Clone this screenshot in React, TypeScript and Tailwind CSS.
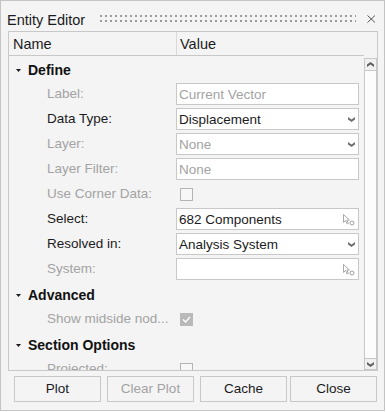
import React from "react";

const Chevron = ({ color = "#707070" }: { color?: string }) => (
  <svg width="7" height="5" viewBox="0 0 7 5">
    <path d="M0 0 L3.5 2.4 L7 0 L7 2.4 L3.5 5 L0 2.4 Z" fill={color} />
  </svg>
);

const PickIcon = () => (
  <svg width="13" height="13" viewBox="0 0 13 13">
    <path d="M1.5 1.5 L1.5 9.5 L3.5 7.5 L5.2 11 L6.4 10.4 L4.8 7 L7.5 7 Z" fill="white" stroke="#a0a0a0" strokeWidth="0.9" strokeLinejoin="round" />
    <circle cx="10" cy="10" r="2" fill="white" stroke="#a0a0a0" strokeWidth="1" />
  </svg>
);

const Section = ({ title }: { title: string }) => (
  <div className="h-[25px] flex items-center pl-[7px] shrink-0">
    <svg width="5" height="3" viewBox="0 0 5 3" className="mr-[7px]">
      <path d="M0 0 L5 0 L2.5 3 Z" fill="#1a1a1a" />
    </svg>
    <span className="text-[14px] font-bold text-[#111]">{title}</span>
  </div>
);

const Row = ({ label, disabled, children }: { label: string; disabled?: boolean; children?: React.ReactNode }) => (
  <div className="h-[25px] flex shrink-0">
    <div className={`w-[167px] h-[23px] pl-[38px] flex items-center text-[13.5px] whitespace-nowrap ${disabled ? "text-[#a3a3a3]" : "text-[#1b1b22]"}`}>
      {label}
    </div>
    <div className="flex-1 flex">{children}</div>
  </div>
);

const Field = ({ text, gray, select, pick }: { text?: string; gray?: boolean; select?: boolean; pick?: boolean }) => (
  <div className="w-[183px] h-[22px] border border-[#c8c8c8] bg-white flex items-center pl-[2px] pr-[3px]">
    <span className={`flex-1 text-[13.5px] leading-[16px] pt-[1px] whitespace-nowrap ${gray ? "text-[#a3a3a3]" : "text-[#1b1b22]"}`}>{text}</span>
    {select && <Chevron />}
    {pick && <PickIcon />}
  </div>
);

const Check = ({ checked }: { checked?: boolean }) => (
  <div className="h-[22px] flex items-center pl-[4px]">
    {checked ? (
      <div className="w-[13px] h-[13px] bg-[#b9b9b9] flex items-center justify-center">
        <svg width="9" height="7" viewBox="0 0 9 7">
          <path d="M1 3.5 L3.5 6 L8 1" fill="none" stroke="white" strokeWidth="1.3" />
        </svg>
      </div>
    ) : (
      <div className="w-[13px] h-[13px] border border-[#b4b4b4] bg-[#f7f7f7]" />
    )}
  </div>
);

const Btn = ({ label, disabled, ml }: { label: string; disabled?: boolean; ml: string }) => (
  <div className={`${ml} w-[87px] h-[26px] border border-[#c8c8c8] bg-[#f4f4f4] flex items-center justify-center pt-[1px] text-[13.5px] ${disabled ? "text-[#a3a3a3]" : "text-[#1b1b22]"}`}>
    {label}
  </div>
);

export default function App() {
  return (
    <div className="w-[385px] h-[411px] border border-[#c4c4c4] bg-[#f4f4f4] flex flex-col font-['Liberation_Sans',Arial,sans-serif] overflow-hidden">
      {/* title bar */}
      <div className="h-[30px] shrink-0 flex items-start pt-[11px] pl-[6px]">
        <span className="text-[14.5px] leading-[17px] text-[#1b1b22] whitespace-nowrap">Entity Editor</span>
        <svg width="256" height="8" className="ml-[15px] mt-[3px]">
          <defs>
            <pattern id="dots" width="5" height="5" patternUnits="userSpaceOnUse">
              <rect x="0" y="0" width="2" height="2" fill="#9c9c9c" />
            </pattern>
          </defs>
          <rect x="0" y="0" width="256" height="7" fill="url(#dots)" />
        </svg>
        <svg width="9" height="8" viewBox="0 0 9 8" className="ml-[11px] mt-[3px]">
          <path d="M0.5 0.5 L8 7.5 M8 0.5 L0.5 7.5" stroke="#555" strokeWidth="1" />
        </svg>
      </div>

      {/* panel */}
      <div className="ml-[7px] w-[370px] h-[340px] shrink-0 border border-[#c8c8c8] flex flex-col">
        <div className="h-[24px] shrink-0 flex">
          <div className="w-[355px] border-b border-[#c8c8c8] flex text-[14.5px] text-[#1b1b22]">
            <div className="w-[168px] border-r border-[#d9d9d9] pl-[4px] pt-[2px] flex items-center">Name</div>
            <div className="pl-[3px] pt-[2px] flex items-center">Value</div>
          </div>
        </div>
        <div className="flex-1 flex overflow-hidden">
          <div className="w-[355px] pt-[2px] flex flex-col overflow-hidden">
            <Section title="Define" />
            <Row label="Label:" disabled>
              <Field text="Current Vector" gray />
            </Row>
            <Row label="Data Type:">
              <Field text="Displacement" select />
            </Row>
            <Row label="Layer:" disabled>
              <Field text="None" gray select />
            </Row>
            <Row label="Layer Filter:" disabled>
              <Field text="None" gray />
            </Row>
            <Row label="Use Corner Data:" disabled>
              <Check />
            </Row>
            <Row label="Select:">
              <Field text="682 Components" pick />
            </Row>
            <Row label="Resolved in:">
              <Field text="Analysis System" select />
            </Row>
            <Row label="System:" disabled>
              <Field text="" pick />
            </Row>
            <Section title="Advanced" />
            <Row label="Show midside nod..." disabled>
              <Check checked />
            </Row>
            <Section title="Section Options" />
            <Row label="Projected:" disabled>
              <Check />
            </Row>
          </div>
          {/* scrollbar */}
          <div className="w-[13px] pt-[2px] flex flex-col">
            <div className="h-[13px] border border-[#c8c8c8] bg-[#f0f0f0] flex items-center justify-center">
              <svg width="7" height="5" viewBox="0 0 7 5">
                <path d="M0 5 L3.5 2.6 L7 5 L7 2.6 L3.5 0 L0 2.6 Z" fill="#606060" />
              </svg>
            </div>
            <div className="flex-1 border-x border-[#c8c8c8] bg-[#fcfcfc]" />
            <div className="h-[12px] border border-[#c8c8c8] bg-[#f0f0f0] flex items-center justify-center">
              <Chevron color="#606060" />
            </div>
          </div>
        </div>
      </div>

      {/* buttons */}
      <div className="mt-[5px] flex">
        <Btn label="Plot" ml="ml-[13px]" />
        <Btn label="Clear Plot" disabled ml="ml-[6px]" />
        <Btn label="Cache" ml="ml-[6px]" />
        <Btn label="Close" ml="ml-[3px]" />
      </div>
    </div>
  );
}
